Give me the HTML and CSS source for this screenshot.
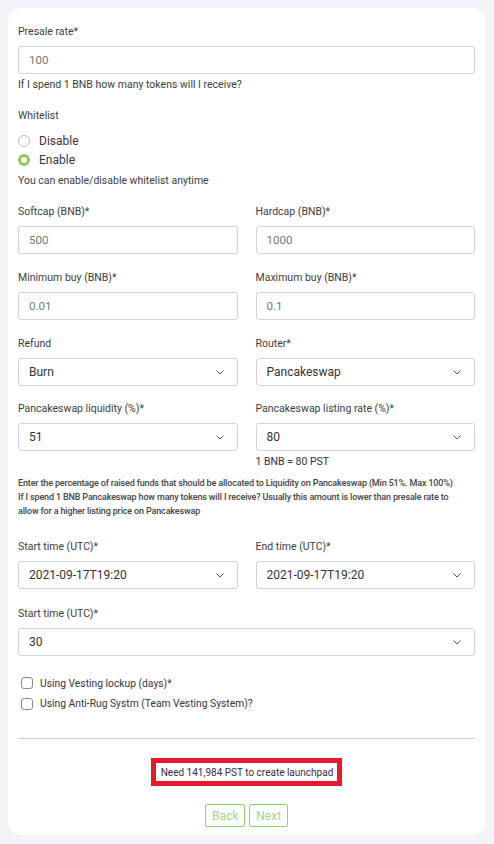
FILE: index.html
```html
<!DOCTYPE html>
<html>
<head>
<meta charset="utf-8">
<link rel="stylesheet" href="styles.css">
</head>
<body>
<div class="card">
  <div class="label">Presale rate*</div>
  <input class="input" value="100">
  <div class="hint">If I spend 1 BNB how many tokens will I receive?</div>

  <div class="label whitelist">Whitelist</div>
  <div class="radios">
    <div class="radio"><span class="dot"></span><span>Disable</span></div>
    <div class="radio"><span class="dot on"></span><span>Enable</span></div>
  </div>
  <div class="hint after-radios">You can enable/disable whitelist anytime</div>

  <div class="grid first">
    <div class="field">
      <div class="label">Softcap (BNB)*</div>
      <input class="input" value="500">
    </div>
    <div class="field">
      <div class="label">Hardcap (BNB)*</div>
      <input class="input" value="1000">
    </div>
  </div>

  <div class="grid">
    <div class="field">
      <div class="label">Minimum buy (BNB)*</div>
      <input class="input" value="0.01">
    </div>
    <div class="field">
      <div class="label">Maximum buy (BNB)*</div>
      <input class="input" value="0.1">
    </div>
  </div>

  <div class="grid">
    <div class="field">
      <div class="label">Refund</div>
      <div class="select"><span>Burn</span><svg class="chev" width="8" height="5" viewBox="0 0 8 5"><path d="M0.5 0.5 L4 4 L7.5 0.5" fill="none" stroke="#555" stroke-width="1"/></svg></div>
    </div>
    <div class="field">
      <div class="label">Router*</div>
      <div class="select"><span>Pancakeswap</span><svg class="chev" width="8" height="5" viewBox="0 0 8 5"><path d="M0.5 0.5 L4 4 L7.5 0.5" fill="none" stroke="#555" stroke-width="1"/></svg></div>
    </div>
  </div>

  <div class="grid tight">
    <div class="field">
      <div class="label">Pancakeswap liquidity (%)*</div>
      <div class="select"><span>51</span><svg class="chev" width="8" height="5" viewBox="0 0 8 5"><path d="M0.5 0.5 L4 4 L7.5 0.5" fill="none" stroke="#555" stroke-width="1"/></svg></div>
    </div>
    <div class="field">
      <div class="label">Pancakeswap listing rate (%)*</div>
      <div class="select"><span>80</span><svg class="chev" width="8" height="5" viewBox="0 0 8 5"><path d="M0.5 0.5 L4 4 L7.5 0.5" fill="none" stroke="#555" stroke-width="1"/></svg></div>
      <div class="rate">1 BNB = 80 PST</div>
    </div>
  </div>

  <div class="note">
    <div>Enter the percentage of raised funds that should be allocated to Liquidity on Pancakeswap (Min 51%. Max 100%)</div>
    <div>If I spend 1 BNB Pancakeswap how many tokens will I receive? Usually this amount is lower than presale rate to allow for a higher listing price on Pancakeswap</div>
  </div>

  <div class="grid times">
    <div class="field">
      <div class="label">Start time (UTC)*</div>
      <div class="select"><span>2021-09-17T19:20</span><svg class="chev" width="8" height="5" viewBox="0 0 8 5"><path d="M0.5 0.5 L4 4 L7.5 0.5" fill="none" stroke="#555" stroke-width="1"/></svg></div>
    </div>
    <div class="field">
      <div class="label">End time (UTC)*</div>
      <div class="select"><span>2021-09-17T19:20</span><svg class="chev" width="8" height="5" viewBox="0 0 8 5"><path d="M0.5 0.5 L4 4 L7.5 0.5" fill="none" stroke="#555" stroke-width="1"/></svg></div>
    </div>
  </div>

  <div class="field single">
    <div class="label">Start time (UTC)*</div>
    <div class="select"><span>30</span><svg class="chev" width="8" height="5" viewBox="0 0 8 5"><path d="M0.5 0.5 L4 4 L7.5 0.5" fill="none" stroke="#555" stroke-width="1"/></svg></div>
  </div>

  <div class="checks">
    <div class="check"><span class="box"></span><span>Using Vesting lockup (days)*</span></div>
    <div class="check"><span class="box"></span><span>Using Anti-Rug Systm (Team Vesting System)?</span></div>
  </div>

  <div class="divider"></div>

  <div class="need-wrap">
    <div class="need">Need 141,984 PST to create launchpad</div>
  </div>

  <div class="buttons">
    <button class="btn">Back</button>
    <button class="btn">Next</button>
  </div>
</div>
</body>
</html>
```

FILE: styles.css
```css
* { box-sizing: border-box; }
html, body { margin: 0; padding: 0; }
body {
  background: #f3f4f8;
  font-family: Roboto, "Liberation Sans", sans-serif;
  color: #3d3d3d;
  padding: 8px;
}
.card {
  background: #fff;
  border-radius: 14px;
  width: 477px;
  padding: 16px 10px 8px 10px;
  display: flex;
  flex-direction: column;
}
.label {
  font-size: 10.5px;
  line-height: 16px;
  color: #3d3d3d;
  margin-bottom: 6px;
}
.input {
  display: block;
  width: 100%;
  height: 28px;
  border: 1px solid #d3d3d3;
  border-radius: 3px;
  padding: 0 10px;
  font-family: Roboto, "Liberation Sans", sans-serif;
  font-size: 11.5px;
  color: #777;
  background: #fff;
  outline: none;
}
.hint {
  font-size: 10.5px;
  line-height: 16px;
  color: #3d3d3d;
  margin-top: 3px;
}
.whitelist { margin-top: 15px; margin-bottom: 0; }
.radios {
  display: flex;
  flex-direction: column;
  margin-top: 7px;
}
.radio {
  display: flex;
  align-items: center;
  height: 19px;
  font-size: 12px;
  color: #3a3340;
}
.dot {
  width: 12px;
  height: 12px;
  border-radius: 50%;
  border: 1px solid #bdbdbd;
  margin-right: 9px;
  background: #fff;
}
.dot.on {
  border: 3.5px solid #8bc94f;
  background: #fff;
}
.after-radios { margin-top: 4px; }
.grid {
  display: grid;
  grid-template-columns: 1fr 1fr;
  column-gap: 18px;
  margin-top: 16px;
}
.grid.first { margin-top: 15px; }
.grid.tight { margin-top: 15px; }
.field { display: flex; flex-direction: column; }
.select {
  height: 28px;
  border: 1px solid #d3d3d3;
  border-radius: 3px;
  padding: 0 13px 0 10px;
  display: flex;
  align-items: center;
  justify-content: space-between;
  font-size: 12px;
  color: #333;
}
.chev { display: block; }
.rate {
  font-size: 10.5px;
  line-height: 16px;
  margin-top: 3px;
  color: #333;
}
.note {
  margin-top: 6px;
  padding-right: 14px;
  font-size: 9px;
  line-height: 14px;
  font-weight: 500;
  letter-spacing: -0.15px;
  color: #454545;
}
.grid.times { margin-top: 21px; }
.single { margin-top: 17px; }
.checks {
  display: flex;
  flex-direction: column;
  margin-top: 17px;
  padding-left: 3px;
}
.check {
  display: flex;
  align-items: center;
  height: 20.5px;
  font-size: 10.3px;
  color: #3a3340;
}
.box {
  width: 12px;
  height: 12px;
  border: 1px solid #8a8a8a;
  border-radius: 3px;
  margin-right: 7px;
}
.divider {
  height: 1px;
  background: #cfcfcf;
  margin-top: 24px;
}
.need-wrap {
  display: flex;
  justify-content: center;
  margin-top: 19px;
}
.need {
  border: 5px solid #e8192c;
  height: 28px;
  padding: 0 4px 0 5px;
  display: flex;
  align-items: center;
  font-size: 10px;
  font-weight: 400;
  color: #3b2a4a;
}
.buttons {
  display: flex;
  justify-content: center;
  gap: 4px;
  margin-top: 18px;
}
.btn {
  height: 23px;
  border: 1px solid #8fd16f;
  border-radius: 2px;
  background: #fff;
  color: #a3d887;
  font-family: Roboto, "Liberation Sans", sans-serif;
  font-size: 12px;
  padding: 0 6px;
}
```
